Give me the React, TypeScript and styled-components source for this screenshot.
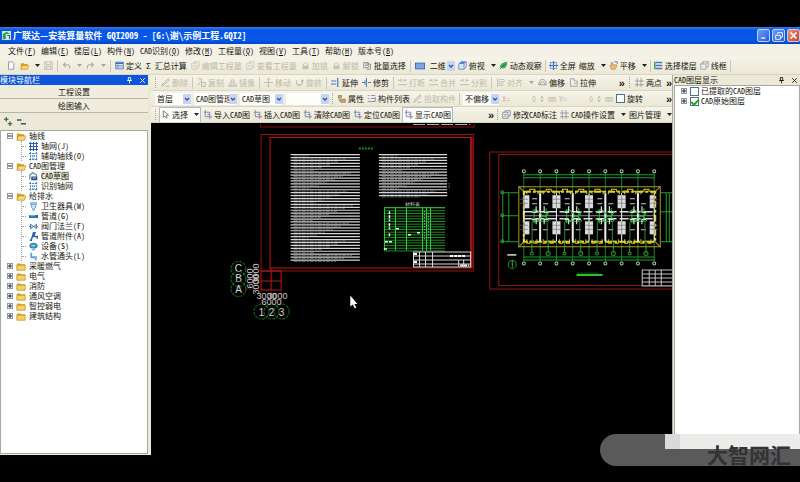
import React from 'react';
import styled, { createGlobalStyle, css } from 'styled-components';

const Global = createGlobalStyle`
  * { box-sizing: border-box; }
  body { margin: 0; background: #000; }
  body, button, select, input {
    font-family: "Noto Sans Mono CJK SC", "Liberation Sans", "Noto Sans CJK SC", sans-serif;
    font-size: 8px;
    line-height: 10px;
    color: #16160f;
  }
  button { border: 0; background: none; padding: 0; cursor: default; white-space: nowrap; }
  ul { list-style: none; margin: 0; padding: 0; }
`;

const Screen = styled.div`
  min-height: 100vh;
  display: flex;
  flex-direction: column;
  padding: 27px 0;
  position: relative;
  overflow: hidden;
`;
const AppWindow = styled.main`
  flex: 1;
  display: flex;
  flex-direction: column;
  background: #ece9d8;
`;
const TitleBar = styled.header`
  height: 17px;
  display: flex;
  align-items: center;
  gap: 2px;
  padding: 0 0 0 2px;
  background: linear-gradient(#2f7cf0, #0a55e0 20%, #0758ee 75%, #0446c4);
`;
const Title = styled.h1`
  flex: 1;
  margin: 0;
  font-size: 9px;
  font-weight: 700;
  line-height: 12px;
  color: #fff;
  white-space: nowrap;
`;
const CaptionButton = styled.button<{ $close?: boolean }>`
  width: 13px;
  height: 13px;
  display: grid;
  place-items: center;
  border: 1px solid #b9d0fa;
  border-radius: 2px;
  background: ${p => (p.$close ? 'linear-gradient(135deg,#f09070,#d5401c)' : 'linear-gradient(135deg,#6f9cf4,#2a5cd8)')};
`;
const MenuBar = styled.nav`
  height: 13px;
  display: flex;
  align-items: center;
  gap: 5px;
  padding-left: 8px;
  background: #f3f1e6;
`;
const bar = css`
  display: flex;
  align-items: center;
  background: linear-gradient(#f6f4e9, #ebe8d6);
  border-bottom: 1px solid #d9d5c1;
  overflow: hidden;
  white-space: nowrap;
`;
const MainBar = styled.div`
  ${bar}
  height: 18px;
  gap: 4px;
  padding-left: 7px;
`;
const ToolRow = styled.div<{ $gap: number }>`
  ${bar}
  height: 16px;
  gap: ${p => p.$gap}px;
  padding-left: 4px;
`;
const Group = styled.div<{ $gap?: number; $end?: boolean }>`
  display: flex;
  align-items: center;
  gap: ${p => p.$gap ?? 4}px;
  margin-left: ${p => (p.$end ? 'auto' : '0')};
`;
const Sep = styled.span`
  width: 1px;
  height: 12px;
  flex: none;
  background: #cbc7b4;
`;
const Grip = styled.span`
  width: 2px;
  height: 11px;
  flex: none;
  border-left: 1px dotted #aaa693;
`;
const ToolButton = styled.button<{ $off?: boolean; $boxed?: boolean }>`
  display: flex;
  align-items: center;
  flex: none;
  gap: 2px;
  color: ${p => (p.$off ? '#bcb9a9' : '#16160f')};
  font-weight: ${p => (p.$off ? 400 : 500)};
  ${p => p.$off && 'svg { opacity: .35; filter: grayscale(1); }'}
  ${p => p.$boxed && 'background: #fcfcf8; height: 14px; padding: 0 1px; outline: 1px solid #b4b8c6;'}
`;
const MoreButton = styled.button`
  flex: none;
  font-family: "Liberation Sans", sans-serif;
  font-size: 11px;
  font-weight: 700;
`;
const Combo = styled.label<{ $w: number; $plain?: boolean }>`
  width: ${p => p.$w}px;
  height: 12px;
  flex: none;
  display: flex;
  align-items: center;
  background: ${p => (p.$plain ? 'transparent' : '#fdfdfa')};
`;
const Select = styled.select`
  appearance: none;
  border: 0;
  background: none;
  padding: 0 0 0 2px;
  flex: 1;
  min-width: 0;
  height: 12px;
  outline: 0;
`;
const Chevron = styled.span`
  width: 8px;
  height: 10px;
  display: grid;
  place-items: center;
  border-radius: 1px;
  background: #c6d3f5;
`;
const Field = styled.label`
  display: flex;
  align-items: center;
  flex: none;
  gap: 2px;
  color: #c0bdad;
`;
const NumberBox = styled.input`
  width: 24px;
  height: 10px;
  border: 0;
  padding: 0;
  background: transparent;
  text-align: right;
  color: #c0bdad;
`;
const Check = styled.input`
  appearance: none;
  width: 9px;
  height: 9px;
  margin: 0;
  flex: none;
  display: grid;
  place-items: center;
  border: 1px solid #4d6f91;
  background: #fff;
  &:checked::before {
    content: "";
    width: 6px;
    height: 3px;
    border: solid #21a121;
    border-width: 0 0 2px 2px;
    transform: rotate(-45deg);
  }
`;
const CheckLabel = styled.label`
  display: flex;
  align-items: center;
  gap: 2px;
  flex: none;
`;

const Body = styled.div`
  flex: 1;
  display: grid;
  grid-template-columns: 151px minmax(0, 1fr) 128px;
`;
const Dock = styled.aside<{ $right?: boolean }>`
  display: flex;
  flex-direction: column;
  min-width: 0;
  padding: ${p => (p.$right ? '0 0 0 1px' : '0 3px 1px 0')};
  border-left: ${p => (p.$right ? '1px solid #a7a6a0' : '0')};
`;
const DockHead = styled.h2<{ $blue?: boolean }>`
  margin: 0;
  height: 10px;
  display: flex;
  align-items: center;
  gap: 6px;
  padding-right: 2px;
  font-size: 8px;
  line-height: 10px;
  font-weight: 400;
  color: ${p => (p.$blue ? '#fff' : '#16160f')};
  background: ${p => (p.$blue ? '#0b56dc' : '#ece9d8')};
  span { flex: 1; }
`;
const DockTab = styled.button`
  height: 14px;
  border-bottom: 1px solid #b9b6a5;
  background: #f0eddf;
`;
const DockTools = styled.div`
  height: 17px;
  display: flex;
  align-items: center;
  gap: 4px;
  padding-left: 4px;
`;
const TreeBox = styled.div<{ $pad: number }>`
  flex: 1;
  padding: ${p => p.$pad}px 0 0 6px;
  background: #fff;
  border: 1px solid #a9a89f;
  white-space: nowrap;
`;
const TreeRow = styled.div`
  height: 10px;
  display: flex;
  align-items: center;
  gap: 3px;
`;
const Children = styled.ul`
  margin-left: 14px;
  border-left: 1px dotted #a8a8a8;
`;
const Stub = styled.span`
  width: 4px;
  height: 1px;
  border-top: 1px dotted #a8a8a8;
`;
const Leaf = styled.span<{ $on?: boolean }>`
  background: ${p => (p.$on ? '#e9e6d6' : 'transparent')};
`;
const Expander = styled.button`
  width: 6px;
  height: 6px;
  flex: none;
  display: grid;
  place-items: center;
  border: 1px solid #8d99a8;
  background: #fff;
`;
const Center = styled.section`
  display: flex;
  flex-direction: column;
  min-width: 0;
  background: #000;
`;
const Canvas = styled.svg`
  flex: 1;
  width: 100%;
  min-height: 0;
  display: block;
  font-family: "Liberation Sans", sans-serif;
`;
const Watermark = styled.div`
  position: absolute;
  right: 0;
  bottom: 16px;
  width: 200px;
  height: 32px;
  display: flex;
  justify-content: flex-end;
  align-items: flex-start;
  border-radius: 16px 0 0 16px;
  background: #5a5a5a;
`;
const Pale = styled.span`
  width: 135px;
  height: 15px;
  background: linear-gradient(90deg, #dadada 15px, #ececea 15px);
`;
const Brand = styled.strong`
  position: absolute;
  right: 9px;
  bottom: 0;
  font-family: "Noto Sans CJK SC", sans-serif;
  font-size: 21px;
  line-height: 24px;
  font-weight: 700;
  color: #333336;
`;

const B = '#3f6fb5';
const glyphs: Record<string, React.ReactNode> = {
  page: <path d="M2 1h5l2 2v8H2z" fill="#fff" stroke="#7185a5" />,
  folder: <><path d="M1 3h4l1 1h5v7H1z" fill="#d9a02c" /><path d="M1 5h10v6H1z" fill="#f6d265" stroke="#b98518" strokeWidth=".7" /></>,
  open: <><path d="M1 3h4l1 1h4v7H1z" fill="#d9a02c" /><path d="M3 6h9l-2 5H1z" fill="#f8da7a" stroke="#b98518" strokeWidth=".7" /></>,
  save: <path d="M1 1h10v10H1zM3 1v4h6V1M3 11V7h6v4" fill="none" stroke="#444" />,
  undo: <path d="M2 5h5q4 0 3 5M5 2 2 5l3 3" fill="none" stroke="#333" strokeWidth="1.5" />,
  redo: <path d="M10 5H5q-4 0-3 5M7 2l3 3-3 3" fill="none" stroke="#333" strokeWidth="1.5" />,
  table: <><rect x="1" y="1.500" width="10" height="9" fill="#e3ecfa" stroke={B} /><path d="M1 3h10" stroke={B} strokeWidth="2" /><path d="M1 6h10M1 8h10M4 3v7" stroke={B} strokeWidth=".7" /></>,
  sheet: <path d="M1 3h7v8H1zM4 3V1h7v7H8M3 6h3M3 8h3" fill="none" stroke="#6c7c98" />,
  lock: <><path d="M3 6V4q3-4 6 0v2" fill="none" stroke="#444" /><rect x="2" y="6" width="8" height="5" fill="#777" /></>,
  batch: <path d="M1 2h6v7H1zM3 4h7v7H5M3 6h3" fill="none" stroke="#6a7892" />,
  screen: <rect x="0.500" y="2.500" width="11" height="7" fill="#7da6ea" stroke="#3662b0" />,
  cube: <><path d="M1 4l3-3h7v7l-3 3H1z" fill="#d6e4fa" stroke="#5680c2" /><path d="M1 4l3-3h7L8 4z" fill="#4d83d6" /><path d="M8 4v7" stroke="#5680c2" /></>,
  leaf: <><path d="M1 8Q2 2 11 1q0 9-6 9z" fill="#43a85a" /><path d="M1 11l7-7" stroke="#1d7032" /></>,
  full: <><rect x="2" y="2" width="8" height="8" fill="#dfe9fa" stroke="#6d8cc6" /><path d="M6 0v12M0 6h12" stroke="#3b6cc4" strokeWidth="1.500" /></>,
  hand: <><path d="M3 11 1 6l2 0V2h2v3h5v3l-2 3z" fill="#eab980" stroke="#a87434" strokeWidth=".7" /><path d="M7 1h4v3" fill="none" stroke={B} /></>,
  floors: <><path d="M2 2h9M2 6h9M2 10h9" stroke="#4478b8" strokeWidth="2" /><path d="M1 1v10" stroke="#41a35a" strokeWidth="2" /></>,
  wire: <path d="M1 4h7v7H1zM4 4V1h7v7H8M1 4l3-3M8 4l3-3" fill="none" stroke="#8696b5" />,
  pen: <path d="M1 11l2-4 7-6 1 2-7 6zM6 11h5" fill="none" stroke="#555" strokeWidth="1.300" />,
  copy: <path d="M1 1h5v5M6 6h5v5H6zM1 10l4-5" fill="none" stroke="#555" strokeWidth="1.300" />,
  mirror: <path d="M5 2v8H1zM7 2v8h4zM0 11h12" fill="none" stroke="#555" />,
  move: <path d="M6 0v12M0 6h12M4 2l2-2 2 2M4 10l2 2 2-2" fill="none" stroke="#555" strokeWidth="1.200" />,
  rotate: <path d="M3 3a4 4 0 1 0 6 0M9 6V3h3" fill="none" stroke="#555" strokeWidth="1.400" />,
  extend: <path d="M0 4h7M0 8h7M9 0v12" stroke="#4a79c4" strokeWidth="1.600" />,
  trim: <path d="M0 6h4M8 6h4M6 0v12M4 3v6" stroke="#4a79c4" strokeWidth="1.300" />,
  cut: <path d="M0 3h4M8 3h4M0 9h12M4 1v4M8 1v4" stroke="#555" strokeWidth="1.300" />,
  align: <path d="M2 0v12M4 2h7v3H4zM4 7h5v3H4z" fill="none" stroke="#555" />,
  offset: <path d="M1 9q0-7 5-7t5 7zM3 9q0-4 3-4t3 4" fill="none" stroke="#888ca0" />,
  stretch: <path d="M2 1h5v3h4v7H2zM7 7h3" fill="none" stroke="#8a8fa2" />,
  dots: <path d="M3 0v12M8 0v12M0 4h12M0 9h12" stroke="#8a8a9c" strokeWidth="1" />,
  prop: <><path d="M2 2h4v3H2zM5 7h6v4H5z" fill="#cfa66e" stroke="#967545" /><path d="M3 5v4h2" fill="none" stroke="#777" /></>,
  list: <path d="M1 2h2M5 2h6M1 6h2M5 6h6M1 10h10V4" stroke="#8b86b5" fill="none" strokeWidth="1.200" />,
  arrow: <path d="M3 1v9l2-2 2 3 1-1-1-3h3z" fill="#fff" stroke="#555" />,
  grid: <path d="M3 0v9h9M1 3h8v9M6 6h3" fill="none" stroke="#7c88b0" strokeWidth="1.300" />,
  gridBlue: <path d="M2 0v12M6 0v12M10 0v12M0 2h12M0 6h12M0 10h12" stroke="#2b61b8" strokeWidth="1.400" />,
  gridAux: <path d="M2 0v12M10 0v12M0 2h12M0 10h12M5 4v5M7 4v5" stroke="#3c78c4" strokeWidth="1.200" strokeDasharray="3 1" />,
  cad: <><path d="M1 10V4l4-3 5 3v2" fill="none" stroke="#4b88b5" strokeWidth="1.500" /><rect x="3" y="6" width="8" height="5" fill="#244f80" /><path d="M5 8h4" stroke="#fff" /></>,
  cup: <path d="M2 1h8v2H2zM3 3q0 6 2 6v2h2V9q2 0 2-6" fill="#cfe4fa" stroke="#468cd6" />,
  pipe: <><path d="M0 6h12" stroke="#2272b6" strokeWidth="4" /><path d="M1 5h7" stroke="#a6dbf5" /></>,
  valve: <path d="M0 6h2M10 6h2M2 3l8 6V3L2 9z" stroke="#205b9c" fill="#b9dbf7" />,
  fitting: <path d="M3 11 6 1h2L6 6h5v3M1 11h3" fill="none" stroke="#2865ac" strokeWidth="2" />,
  device: <><ellipse cx="6" cy="5" rx="5" ry="3.500" fill="#3e9fcc" stroke="#155f95" /><path d="M4 9h4v2H4zM3 5h5" fill="#155f95" stroke="#d9f4ff" /></>,
  elbow: <path d="M3 1v6h6v4" fill="none" stroke="#63a3dc" strokeWidth="2.500" />,
  pin: <path d="M4 1h4v5H4zM2 6h8M6 6v5" fill="none" stroke="currentColor" strokeWidth="1.500" />,
  close: <path d="M2 2l8 8M10 2l-8 8" stroke="currentColor" strokeWidth="1.500" />,
  min: <path d="M2 9h6" stroke="#fff" strokeWidth="2" />,
  restore: <path d="M4 4V1h7v7H8M1 5h7v6H1z" fill="none" stroke="#fff" strokeWidth="1.300" />,
  shut: <path d="M2 2l8 8M10 2l-8 8" stroke="#fff" strokeWidth="2.200" />,
  plus: <path d="M3 0v6M0 3h6M8 6v6M5 9h6" stroke="#2a5c3c" strokeWidth="1.600" />,
  minus: <path d="M0 4h6M5 9h7" stroke="#2a5c6c" strokeWidth="1.800" />,
  chev: <path d="M2 4l4 4 4-4" fill="none" stroke="#3356a4" strokeWidth="2.500" />,
  spin: <path d="M3 5l3-4 3 4zM3 7l3 4 3-4z" fill="#c0bdad" />,
  logo: <><rect width="12" height="12" fill="#d9ead8" /><path d="M1 11V4l5-3 5 3H5v7z" fill="#2e9b57" /><path d="M7 6h3v5" fill="none" stroke="#34619b" strokeWidth="1.500" /></>,
};
const Icon = ({ n, s = 10 }: { n: string; s?: number }) => (
  <svg width={s} height={s} viewBox="0 0 12 12" aria-hidden="true">{glyphs[n]}</svg>
);
const Caret = () => <svg width="5" height="3" viewBox="0 0 5 3"><path d="M0 0h5L2.500 3z" fill="#222" /></svg>;

type ToolProps = { i?: string; t?: string; off?: boolean; boxed?: boolean; more?: boolean; label?: string };
const Tool = ({ i, t, off, boxed, more, label }: ToolProps) => (
  <ToolButton $off={off} $boxed={boxed} disabled={off} aria-label={t ?? label}>
    {i && <Icon n={i} s={9} />}{t}{more && <Group $gap={0}>&nbsp;<Caret /></Group>}
  </ToolButton>
);
const Pick = ({ w, v, label, plain }: { w: number; v: string; label: string; plain?: boolean }) => (
  <Combo $w={w} $plain={plain}>
    <Select aria-label={label} defaultValue={v}><option>{v}</option></Select>
    <Chevron><Icon n="chev" s={6} /></Chevron>
  </Combo>
);
const More = () => <MoreButton aria-label="更多">»</MoreButton>;

const menus: [string, string][] = [['文件', 'F'], ['编辑', 'E'], ['楼层', 'L'], ['构件', 'N'], ['CAD识别', 'Q'], ['修改', 'M'], ['工程量', 'Q'], ['视图', 'V'], ['工具', 'T'], ['帮助', 'H'], ['版本号', 'B']];

type Node = { t: string; kids?: [string, string][] };
const tree: Node[] = [
  { t: '轴线', kids: [['gridBlue', '轴网(J)'], ['gridAux', '辅助轴线(O)']] },
  { t: 'CAD图管理', kids: [['cad', 'CAD草图'], ['gridAux', '识别轴网']] },
  { t: '给排水', kids: [['cup', '卫生器具(W)'], ['pipe', '管道(G)'], ['valve', '阀门法兰(F)'], ['fitting', '管道附件(A)'], ['device', '设备(S)'], ['elbow', '水管通头(L)']] },
  { t: '采暖燃气' }, { t: '电气' }, { t: '消防' }, { t: '通风空调' }, { t: '智控弱电' }, { t: '建筑结构' },
];
const Toggle = ({ open }: { open?: boolean }) => (
  <Expander aria-label={open ? '折叠' : '展开'}>
    <svg width="4" height="4" viewBox="0 0 4 4"><path d={open ? 'M0 2h4' : 'M0 2h4M2 0v4'} stroke="#222" /></svg>
  </Expander>
);

const range = (n: number) => Array.from({ length: n }, (_, k) => k);

const Notes = ({ x, y, w, rows }: { x: number; y: number; w: number; rows: number }) => (
  <g>
    {range(rows).map(k => (
      <g key={k}>
        <path d={`M${x} ${y + k * 2.92}h${w}`} stroke="#d6d6d6" strokeWidth="1.200" />
        <path d={`M${x + 3} ${y + 1.400 + k * 2.92}h${(k * 37) % 45 + 15}`} stroke="#777" strokeWidth=".8" strokeDasharray="4 1 2 1" />
      </g>
    ))}
  </g>
);

const NotesSheet = () => (
  <g fill="none">
    <path d="M261 124v3h213v-3" stroke="#8c1010" />
    <path d="M413 124.500h57" stroke="#9fb5ad" strokeDasharray="12 2" />
    <path d="M261.500 134.500h212v136h-212z" stroke="#8f1212" />
    <path d="M270.500 137.500h200v130h-200z" stroke="#c41414" />
    <path d="M471.500 137v131" stroke="#a01212" strokeWidth="2" />
    <path d="M359 148.500h14" stroke="#16861d" strokeWidth="2" strokeDasharray="2 1" />
    <Notes x={291} y={154.500} w={69} rows={37} />
    <Notes x={379} y={154.500} w={68} rows={15} />
    <path d="M449 183v6" stroke="#888" strokeDasharray="1 1" />
    <text x="405" y="206" fontSize="5" fill="#ddd">材料表</text>
    <path d="M384 207.500h61" stroke="#3fdb47" />
    {range(16).map(k => <path key={k} d={`M384 ${210.500 + k * 2.670}h61`} stroke="#1d9c25" strokeWidth=".9" />)}
    <path d="M384.500 207v43M395.500 207v43M406.500 207v43M422.500 207v43M426.500 207v43M430.500 207v43" stroke="#35cf3e" />
    <path d="M389.500 211v10M389.500 223v6M389.500 233v3M396 228.500h3M417 232.500h4M408 234.500h4M385 241.500h8M384 248.500h3" stroke="#e6ffe6" strokeWidth="1.500" strokeDasharray="3 1" />
    <path d="M424.500 211v30M428.500 213v26" stroke="#8fe693" strokeDasharray="1 2" />
    <path d="M413.500 251.500h57v15h-57zM419.500 251v15M425.500 251v15M432.500 251v15M413 255.500h57M413 259.500h57M413 263.500h57M458.500 259v8M463.500 259v8" stroke="#d8d8d8" />
    <path d="M450 255.500h16M414 253.500h4M414 261.500h4M460 265h9" stroke="#fff" strokeWidth="2" strokeDasharray="3 1" />
  </g>
);

const AxisGrid = () => (
  <g fill="none">
    <path d="M261.500 270.500h20v19h-20zM271.500 268v22M261 280.500h20" stroke="#c01818" />
    <path d="M245 268.500h17M245 278.500h16M245 288.500h16M261.500 290v14M271.500 290v14M281.500 290v14" stroke="#511" />
    {['C', 'B', 'A'].map((t, k) => (
      <g key={t}>
        <circle cx="239" cy={268.500 + k * 10} r="7.500" stroke="#156a19" strokeDasharray="3 1" />
        <text x="239" y={272 + k * 10} fontSize="10" textAnchor="middle" fill="#d4d4d4">{t}</text>
      </g>
    ))}
    {['1', '2', '3'].map((t, k) => (
      <g key={t}>
        <circle cx={262 + k * 10} cy="311" r="7.500" stroke="#156a19" strokeDasharray="3 1" />
        <text x={262 + k * 10} y="315" fontSize="10" textAnchor="middle" fill="#d4d4d4">{t}</text>
      </g>
    ))}
    <g fill="#c4c4c4" fontSize="9" textAnchor="middle">
      <text x="267" y="298">3000</text><text x="278" y="298">3000</text><text x="272" y="304">6000</text>
      <text transform="translate(259 284) rotate(-90)">3000</text>
      <text transform="translate(259 273) rotate(-90)">3000</text>
      <text transform="translate(253 278) rotate(-90)">6000</text>
    </g>
  </g>
);

const FloorPlan = () => {
  const axes = range(9).map(k => 523.5 + k * 16.25);
  return (
    <g fill="none">
      <path d="M674 152h-184.500v136.500H674" stroke="#8f1212" />
      <path d="M674 154.500H498.500v130.500H674" stroke="#8f1212" />
      <g stroke="#1f9e2a">
        <path d="M523 174.500h131M523 177.500h131M523 256.500h131M523 259.500h131M502.500 192v49M508.500 192v49M501 192.500h17M501 215.500h17M501 241.500h17M660 192.500h14M660 211.500h14M668.500 192v49M665.500 192v49M660 241.500h14" />
        {axes.map(x => <g key={x}><path d={`M${x} 172v76M${x} 247v14`} strokeWidth=".8" /><circle cx={x} cy="171" r="1.500" stroke="#a3d3a5" /><circle cx={x} cy="263" r="1.500" stroke="#a3d3a5" /></g>)}
        {axes.slice(0, 8).map((x, k) => <g key={x}><path d={`M${x + 8} 240v12`} /><circle cx={x + 8} cy="253" r={k % 2 ? 2 : 1.5} /></g>)}
        {[192, 215, 241].map(y => <circle key={y} cx="502" cy={y} r="1.500" />)}
      </g>
      <path d="M518.500 186.500h141v60h-141zM518 186l6 6M660 186l-6 6M518 247l6-6M660 247l-6-6" stroke="#a89a1c" />
      <path d="M523.500 191.500h131v50h-131z" stroke="#e3d42c" strokeWidth="2" strokeDasharray="7 2 3 2" />
      {axes.slice(0, 8).map(x => <path key={x} d={`M${x + 3} 194v-3h3v-2h5v2h3v3M${x + 3} 239v4h3v-2h4v2h3v-4`} stroke="#d9ca2b" />)}
      <path d="M523 211.500h131M523 218.500h131" stroke="#dedede" strokeWidth="1.500" strokeDasharray="9 3" />
      <path d="M523 215.500h131" stroke="#989" />
      {axes.map((x, k) => (
        <g key={x}>
          <path d={`M${x} 193v48`} stroke="#eee" strokeWidth={k % 2 ? 2 : 1} />
          {k % 2 === 0 && [195, 221].map(y => (
            <g key={y}>
              <rect x={Math.min(Math.max(x - 4, 524), 649)} y={y} width={k === 0 || k === 8 ? 5 : 8} height="13" fill="#dcdcdc" />
              <path d={`M${x - 4} ${y + 4}h8M${x - 4} ${y + 8}h8M${x} ${y}v13`} stroke="#666" strokeWidth=".6" />
            </g>
          ))}
          {k % 2 === 1 && (
            <g>
              <path d={`M${x - 8} 198.500h5M${x + 3} 203.500h5M${x - 8} 203.500h5M${x - 8} 229.500h5M${x + 3} 229.500h5`} stroke="#ccc" />
              <path d={`M${x - 9} 213q4-7 9 0t9-2M${x - 9} 218q5 6 9 0t9 3M${x - 6} 209v14M${x + 6} 208v13M${x - 8} 221h16`} stroke="#27bd35" />
              <path d={`M${x + 7} 222v20M${x - 8} 222v20`} stroke="#387f3d" />
              <path d={`M${x - 4} 206v6h-4M${x + 4} 206v6h4M${x - 4} 224v-5h-4M${x + 4} 224v-5h4`} stroke="#fff" />
            </g>
          )}
        </g>
      ))}
      <path d="M507 254.500h9" stroke="#ddd" strokeWidth="1.500" />
      <circle cx="512" cy="264" r="4" stroke="#23872b" /><path d="M512 260v7" stroke="#35b23e" />
      <path d="M577 272.500h20" stroke="#156e1c" strokeDasharray="2 1" /><path d="M576 274.500h26" stroke="#25c732" strokeWidth="2" />
      <path d="M674 269.500h-32.500v16H674M641 273.500h33M641 277.500h33M641 281.500h33M648.500 269v17M654.500 269v17M660.500 269v17" stroke="#c4c4c4" />
    </g>
  );
};

export default function App() {
  return (
    <Screen>
      <Global />
      <AppWindow>
        <TitleBar>
          <Icon n="logo" s={9} />
          <Title>广联达—安装算量软件 GQI2009 - [G:\谢\示例工程.GQI2]</Title>
          <CaptionButton aria-label="最小化"><Icon n="min" s={8} /></CaptionButton>
          <CaptionButton aria-label="还原"><Icon n="restore" s={8} /></CaptionButton>
          <CaptionButton $close aria-label="关闭"><Icon n="shut" s={9} /></CaptionButton>
        </TitleBar>
        <MenuBar>
          {menus.map(([t, k]) => <ToolButton key={t}><span>{t}(<u>{k}</u>)</span></ToolButton>)}
        </MenuBar>
        <MainBar>
          <Group>
            <Tool i="page" label="新建" /><Tool i="open" label="打开" more /><Tool i="save" label="保存" off />
            <Sep /><Tool i="undo" label="撤销" off more /><Tool i="redo" label="重做" off more /><Sep />
          </Group>
          <Group>
            <Tool i="table" t="定义" /><Tool t="Σ 汇总计算" />
            <Tool i="sheet" t="编辑工程量" off /><Tool i="sheet" t="查看工程量" off />
            <Tool i="lock" t="加锁" off /><Tool i="lock" t="解锁" off /><Tool i="batch" t="批量选择" />
          </Group>
          <Sep />
          <Group $gap={3}>
            <Icon n="screen" /><Pick w={27} v="二维" label="视图模式" plain />
            <Tool i="cube" t="俯视" more /><Tool i="leaf" t="动态观察" /><Sep />
            <Tool i="full" t="全屏" /><Tool t="缩放" more /><Tool i="hand" t="平移" more /><Sep />
            <Tool i="floors" t="选择楼层" /><Tool i="wire" t="线框" /><Sep />
          </Group>
        </MainBar>
        <Body>
          <Dock>
            <DockHead $blue><span>模块导航栏</span><Icon n="pin" s={7} /><Icon n="close" s={7} /></DockHead>
            <DockTab>工程设置</DockTab>
            <DockTab>绘图输入</DockTab>
            <DockTools>
              <Tool i="plus" label="全部展开" /><Tool i="minus" label="全部折叠" />
            </DockTools>
            <TreeBox $pad={0}>
              <ul>
                {tree.map(n => (
                  <li key={n.t}>
                    <TreeRow><Toggle open={!!n.kids} /><Icon n={n.kids ? 'open' : 'folder'} /><span>{n.t}</span></TreeRow>
                    {n.kids && (
                      <Children>
                        {n.kids.map(([i, t]) => (
                          <li key={t}><TreeRow><Stub /><Icon n={i} s={9} /><Leaf $on={t === 'CAD草图'}>{t}</Leaf></TreeRow></li>
                        ))}
                      </Children>
                    )}
                  </li>
                ))}
              </ul>
            </TreeBox>
          </Dock>
          <Center>
            <ToolRow $gap={4}>
              <Grip />
              <Tool i="pen" t="删除" off /><Sep /><Tool i="copy" t="复制" off /><Tool i="mirror" t="镜像" off /><Sep />
              <Tool i="move" t="移动" off /><Tool i="rotate" t="旋转" off /><Sep />
              <Tool i="extend" t="延伸" /><Tool i="trim" t="修剪" /><Sep />
              <Tool i="cut" t="打断" off /><Tool i="cut" t="合并" off /><Tool i="cut" t="分割" off /><Sep />
              <Tool i="align" t="对齐" off more /><Tool i="offset" t="偏移" /><Tool i="stretch" t="拉伸" />
              <Group $end><More /><Grip /><Tool i="dots" t="两点" /><More /></Group>
            </ToolRow>
            <ToolRow $gap={3}>
              <Pick w={36} v="首层" label="楼层" /><Pick w={43} v="CAD图管理" label="构件类型" />
              <Pick w={43} v="CAD草图" label="构件" /><Pick w={43} v="" label="构件名称" />
              <Grip />
              <Tool i="prop" t="属性" /><Tool i="list" t="构件列表" /><Tool i="pen" t="拾取构件" off /><Sep />
              <Pick w={36} v="不偏移" label="偏移方式" />
              <Field>X=<NumberBox disabled defaultValue="0" /><Icon n="spin" s={8} />mm</Field>
              <Field>Y=<NumberBox disabled defaultValue="0" /><Icon n="spin" s={8} />mm</Field>
              <CheckLabel><Check type="checkbox" />旋转</CheckLabel>
              <Group $end><More /></Group>
            </ToolRow>
            <ToolRow $gap={3}>
              <Grip />
              <Tool i="arrow" t="选择" boxed more /><Tool i="grid" t="导入CAD图" /><Tool i="grid" t="插入CAD图" />
              <Tool i="grid" t="清除CAD图" /><Tool i="grid" t="定位CAD图" /><Tool i="grid" t="显示CAD图" boxed />
              <Group $end $gap={3}>
                <More /><Grip /><Tool i="sheet" t="修改CAD标注" /><Tool i="dots" t="CAD操作设置" more /><Tool t="图片管理" more />
              </Group>
            </ToolRow>
            <Canvas viewBox="151 123 521 331" preserveAspectRatio="xMidYMin slice" role="img" aria-label="CAD图">
              <NotesSheet />
              <AxisGrid />
              <FloorPlan />
              <path d="M350.500 295v11l2.500-2 2 4 1.500-1-2-3.500h3z" fill="#fff" />
            </Canvas>
          </Center>
          <Dock $right>
            <DockHead><span>CAD图层显示</span><Icon n="pin" s={7} /><Icon n="close" s={7} /></DockHead>
            <TreeBox $pad={0}>
              <TreeRow><Toggle /><CheckLabel><Check type="checkbox" />已提取的CAD图层</CheckLabel></TreeRow>
              <TreeRow><Toggle /><CheckLabel><Check type="checkbox" defaultChecked />CAD原始图层</CheckLabel></TreeRow>
            </TreeBox>
          </Dock>
        </Body>
      </AppWindow>
      <Watermark><Pale /><Brand>大智网汇</Brand></Watermark>
    </Screen>
  );
}
